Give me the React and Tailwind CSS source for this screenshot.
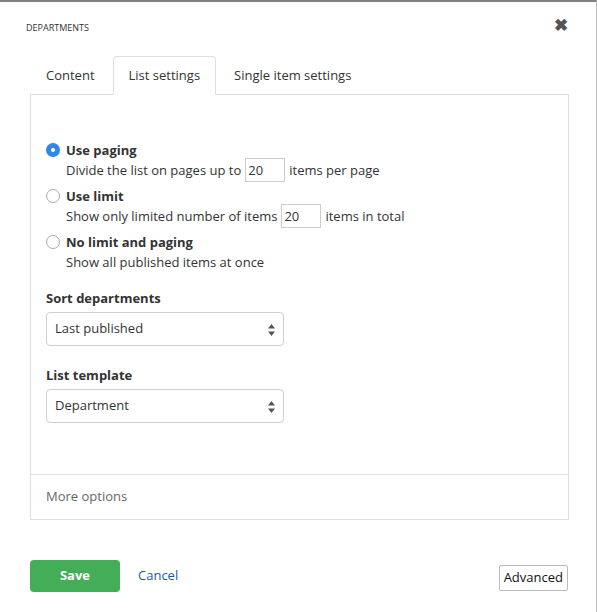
import { useState } from 'react';

const font = { fontFamily: '"Open Sans", "Liberation Sans", sans-serif' };

const SelectBox = ({ value }) => (
  <div className="relative w-[238px] h-[34px] rounded-[4px] border border-[#cfcfcf] bg-white flex items-center px-[8px] text-[13px] text-[#333]">
    <span>{value}</span>
    <svg className="absolute right-[8px] top-[11px]" width="7" height="12" viewBox="0 0 7 12">
      <path d="M3.5 0 L7 4.5 H0 Z" fill="#555" />
      <path d="M3.5 12 L7 7.5 H0 Z" fill="#555" />
    </svg>
  </div>
);

const Radio = ({ checked }) =>
  checked ? (
    <div className="w-[14px] h-[14px] rounded-full bg-[#2f86ee] flex items-center justify-center">
      <div className="w-[4px] h-[4px] rounded-full bg-white" />
    </div>
  ) : (
    <div className="w-[14px] h-[14px] rounded-full border border-[#a9a9a9] bg-white" />
  );

const NumInput = ({ value }) => (
  <span className="inline-flex items-center w-[40px] h-[24px] border border-[#cccccc] px-[2px] mx-[4px] text-[13px] text-[#333]">
    {value}
  </span>
);

const Option = ({ checked, label, children, first }) => (
  <div className={`flex gap-[6px] ${first ? '' : 'mt-[4px]'}`}>
    <div className="pt-[3px]"><Radio checked={checked} /></div>
    <div className="text-[13px] leading-[20px]">
      <div className="font-bold">{label}</div>
      {children}
    </div>
  </div>
);

const App = () => {
  const [tab] = useState('list');

  return (
    <div style={font} className="w-[597px] h-[612px] bg-white border-t-[2px] border-t-[#808080] border-r border-r-[#bbbbbb] text-[#333]">
      <div className="flex items-center justify-between pl-[26px] pr-[28px] pt-[19px]">
        <span className="text-[9px] text-[#333]">DEPARTMENTS</span>
        <span className="text-[17px] leading-none font-bold text-[#555] -mt-[7px]">✖</span>
      </div>

      <div className="ml-[30px] w-[539px] mt-[21px] flex items-end border-b border-[#dddddd] h-[39px]">
        <div className="px-[16px] mr-[2px] h-[38px] pt-[2px] flex items-center text-[13px] text-[#333]">Content</div>
        <div className="px-[15px] mr-[2px] h-[39px] pt-[2px] -mb-px flex items-center text-[13px] text-[#333] border border-[#dddddd] border-b-white bg-white rounded-t-[4px]">
          List settings
        </div>
        <div className="px-[16px] h-[38px] pt-[2px] flex items-center text-[13px] text-[#333]">Single item settings</div>
      </div>

      <div className="ml-[30px] w-[539px] border-x border-b border-[#dddddd]">
        <div className="px-[15px] pt-[45px] h-[379px]">
          <Option checked first label="Use paging">
            <div className="flex items-center h-[24px] -mt-[2px]">
              Divide the list on pages up to <NumInput value="20" /> items per page
            </div>
          </Option>
          <Option label="Use limit">
            <div className="flex items-center h-[24px] -mt-[2px]">
              Show only limited number of items <NumInput value="20" /> items in total
            </div>
          </Option>
          <Option label="No limit and paging">
            <div>Show all published items at once</div>
          </Option>

          <div className="mt-[16px] text-[13px] font-bold leading-[20px]">Sort departments</div>
          <div className="mt-[4px]"><SelectBox value="Last published" /></div>

          <div className="mt-[19px] text-[13px] font-bold leading-[20px]">List template</div>
          <div className="mt-[4px]"><SelectBox value="Department" /></div>
        </div>
        <div className="border-t border-[#dddddd] h-[45px] flex items-center px-[15px] text-[13px] text-[#666]">
          More options
        </div>
      </div>

      <div className="ml-[30px] w-[538px] mt-[40px] flex items-start justify-between">
        <div className="flex items-center">
          <button className="w-[90px] h-[32px] rounded-[4px] bg-[#44ad57] text-white text-[13px] font-bold">Save</button>
          <span className="ml-[18px] text-[13px] text-[#1e57a8]">Cancel</span>
        </div>
        <button className="mt-[5px] h-[26px] px-[4px] rounded-[2px] border border-[#bbbbbb] bg-white text-[13px] text-[#111]">
          Advanced
        </button>
      </div>
    </div>
  );
};

export default App;
